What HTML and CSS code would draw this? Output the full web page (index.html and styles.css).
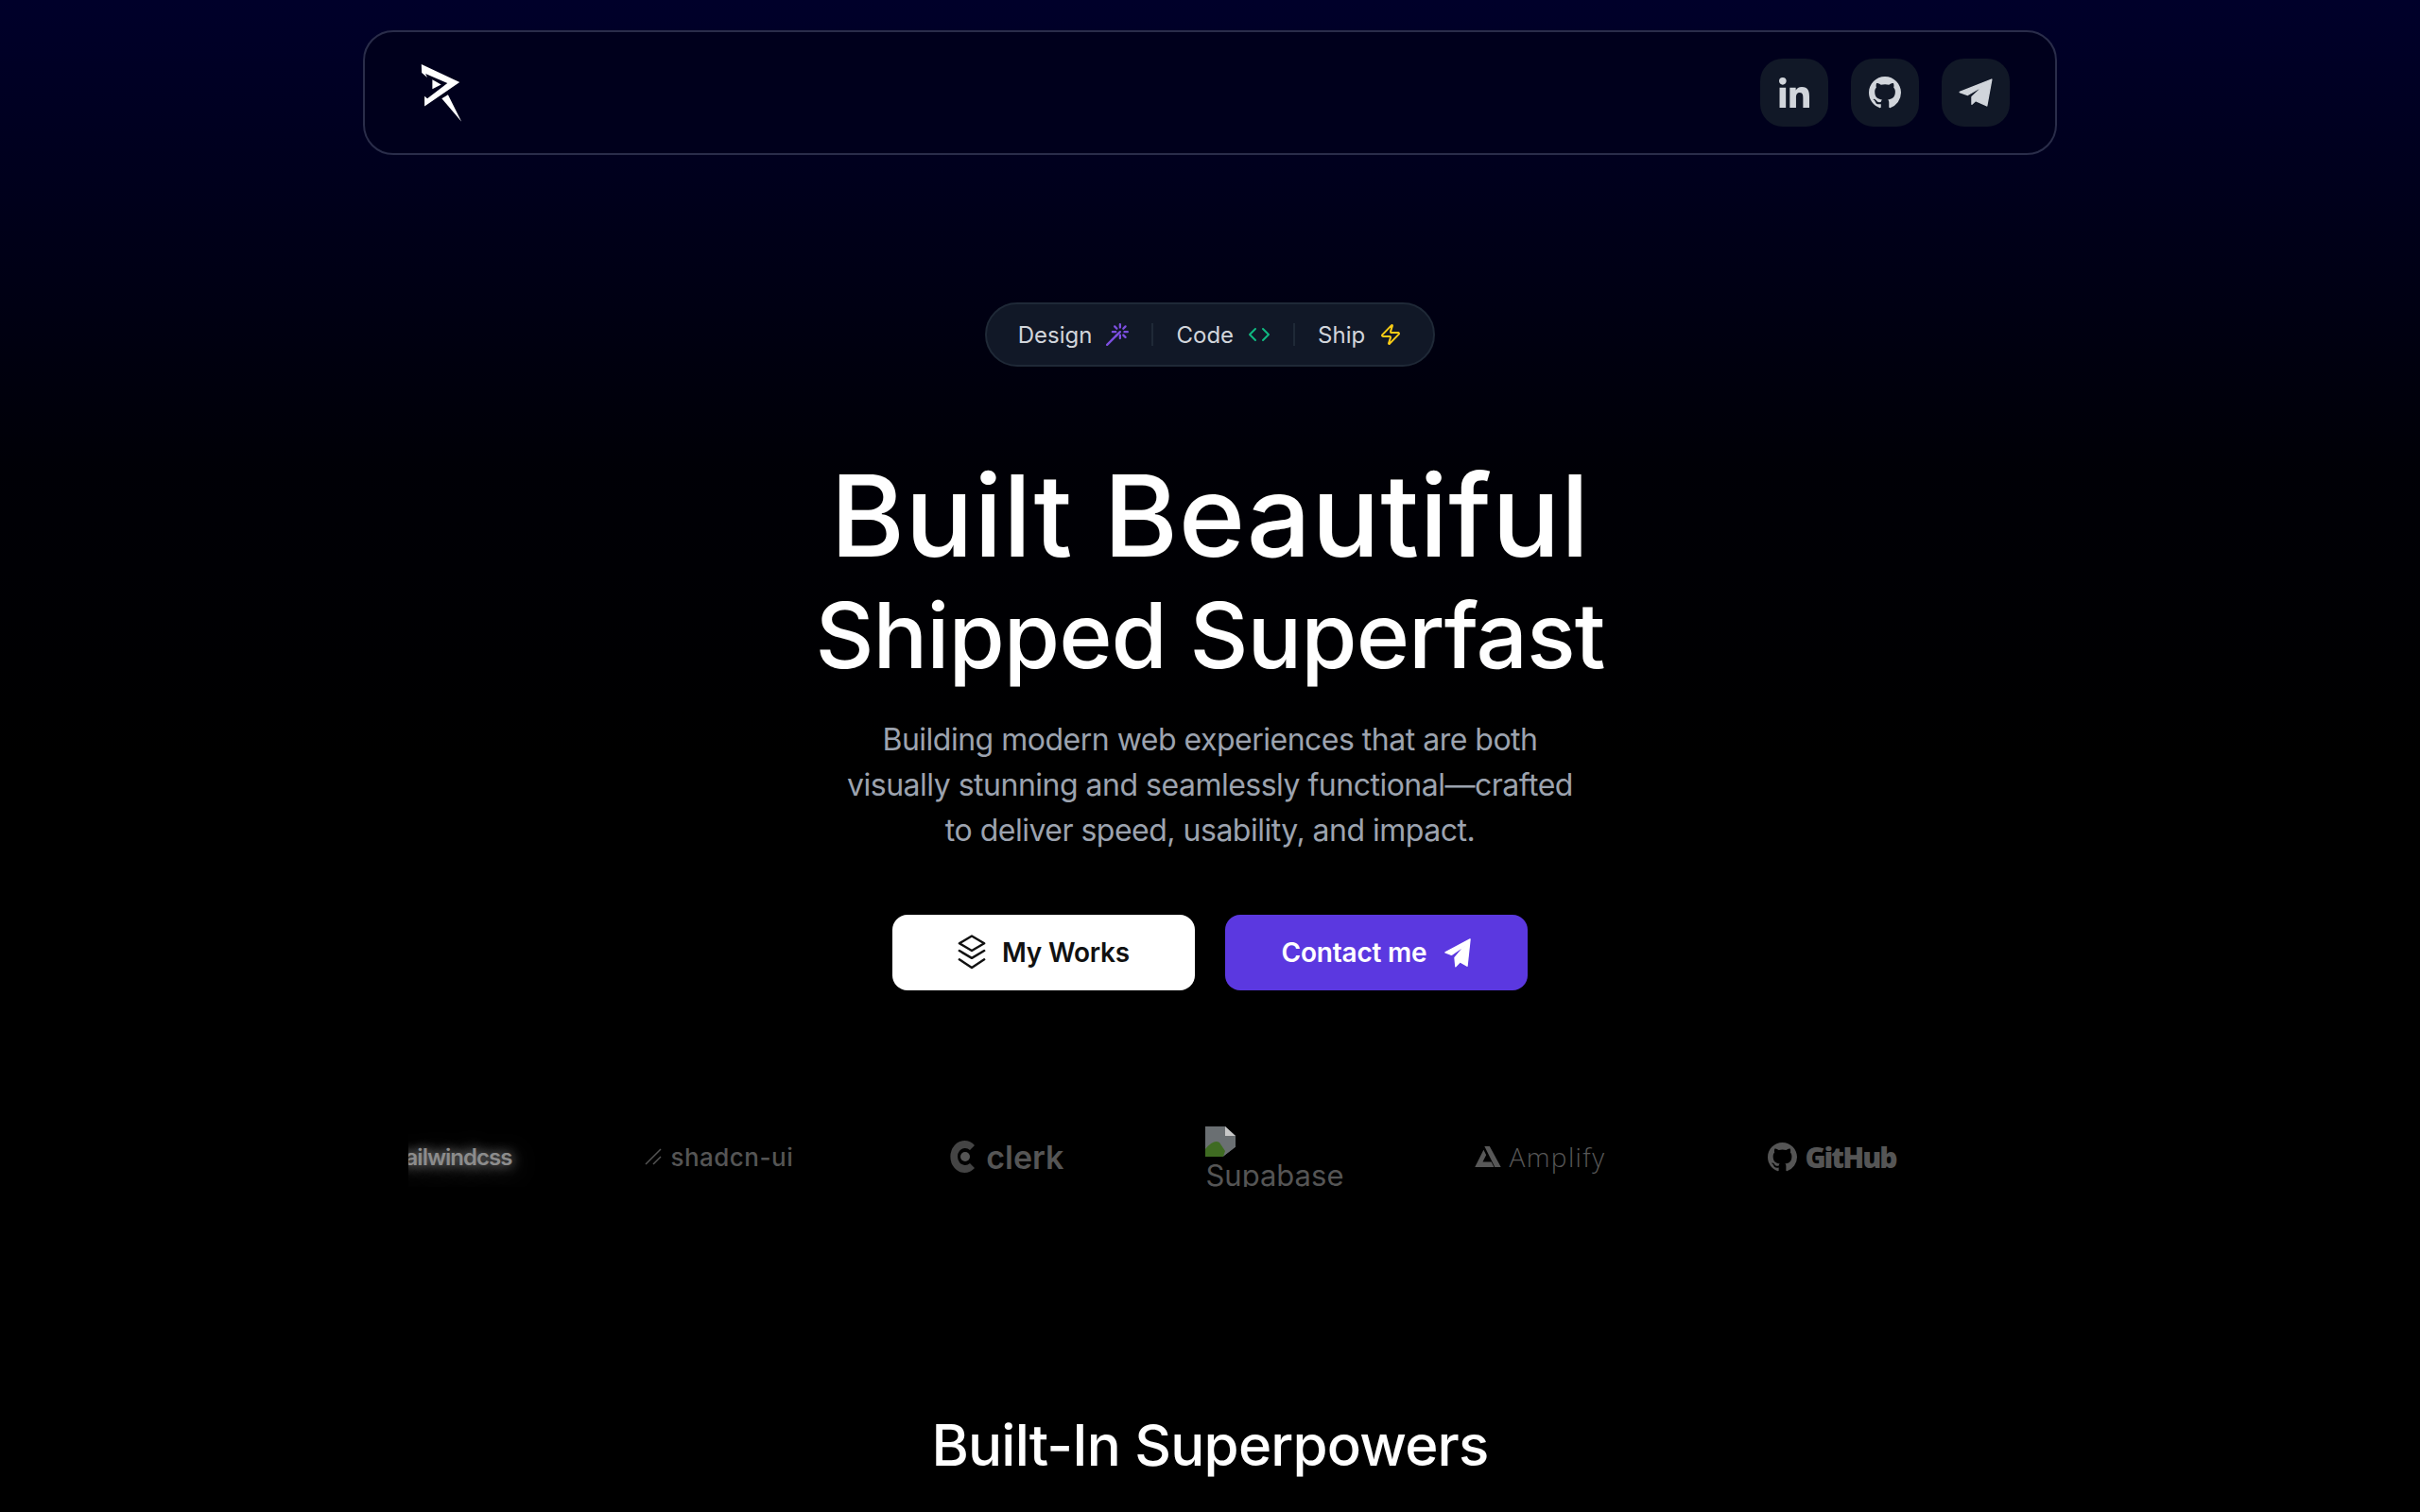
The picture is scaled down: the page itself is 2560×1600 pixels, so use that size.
FILE: index.html
```html
<!DOCTYPE html>
<html lang="en">
<head>
<meta charset="utf-8">
<title>Built Beautiful</title>
<link rel="stylesheet" href="styles.css">
</head>
<body>
<main class="page">
  <header class="nav">
    <svg class="logo" viewBox="0 0 135 190"><path d="M5 3 127 60 15 137V105L24 112 88 63 18 33 24 45 6 30Z"/><path d="M40 52 68 68 40 82Z"/><path d="M70 112 133 186 90 100Z"/></svg>
    <div class="socials">
      <a class="social"><svg class="ic-in" viewBox="0 0 448 448"><path d="M100.28 448H7.4V148.9h92.88zM53.79 108.1C24.09 108.1 0 83.5 0 53.8a53.79 53.79 0 0 1 107.58 0c0 29.7-24.1 54.3-53.79 54.3zM447.9 448h-92.68V302.4c0-34.7-.7-79.2-48.29-79.2-48.29 0-55.69 37.7-55.69 76.7V448h-92.78V148.9h89.08v40.8h1.3c12.4-23.5 42.69-48.3 87.88-48.3 94 0 111.28 61.9 111.28 142.3V448z"/></svg></a>
      <a class="social"><svg class="ic-gh" viewBox="0 0 16 16"><path d="M8 0C3.58 0 0 3.58 0 8c0 3.54 2.29 6.53 5.47 7.59.4.07.55-.17.55-.38 0-.19-.01-.82-.01-1.49-2.01.37-2.53-.49-2.69-.94-.09-.23-.48-.94-.82-1.13-.28-.15-.68-.52-.01-.53.63-.01 1.08.58 1.23.82.72 1.21 1.87.87 2.33.66.07-.52.28-.87.51-1.07-1.78-.2-3.64-.89-3.64-3.95 0-.87.31-1.59.82-2.15-.08-.2-.36-1.02.08-2.12 0 0 .67-.21 2.2.82.64-.18 1.32-.27 2-.27s1.36.09 2 .27c1.53-1.04 2.2-.82 2.2-.82.44 1.1.16 1.92.08 2.12.51.56.82 1.27.82 2.15 0 3.07-1.87 3.75-3.65 3.95.29.25.54.73.54 1.48 0 1.07-.01 1.93-.01 2.2 0 .21.15.46.55.38A8.01 8.01 0 0016 8c0-4.42-3.58-8-8-8z"/></svg></a>
      <a class="social"><svg class="ic-tg" viewBox="-3 -3 106 89"><path d="M100 0 85 83 50 67 38 78V55L75 20 25 49 0 40Z"/></svg></a>
    </div>
  </header>

  <section class="hero">
    <div class="pill">
      <span class="pill-item">Design
        <svg class="stroke violet" viewBox="2 1 21 21"><path d="m3 21 12-12"/><path d="M15 2v3M15 12v3M22 9h-3M11 9H8M20 4l-2 2M12 12l-1 1M20 14l-2-2M12 6l-2-2"/></svg>
      </span>
      <i class="divider"></i>
      <span class="pill-item">Code
        <svg class="stroke green" viewBox="0 0 24 24"><path d="m16 18 6-6-6-6"/><path d="m8 6-6 6 6 6"/></svg>
      </span>
      <i class="divider"></i>
      <span class="pill-item">Ship
        <svg class="stroke yellow" viewBox="0 0 24 24"><path d="M4 14a1 1 0 0 1-.78-1.63l9.9-10.2a.5.5 0 0 1 .86.46l-1.92 6.02A1 1 0 0 0 13 10h7a1 1 0 0 1 .78 1.63l-9.9 10.2a.5.5 0 0 1-.86-.46l1.92-6.02A1 1 0 0 0 11 14z"/></svg>
      </span>
    </div>
    <h1 class="title">Built Beautiful</h1>
    <h2 class="subtitle">Shipped Superfast</h2>
    <p class="lead">Building modern web experiences that are both<br>visually stunning and seamlessly functional—crafted<br>to deliver speed, usability, and impact.</p>
    <div class="actions">
      <a class="btn btn-light"><svg class="btn-layers" viewBox="0 0 30 39"><path d="M15 1.5 28.5 9.5 15 17.5 1.5 9.5Z"/><path d="M1.5 17.500 15 25.500 28.500 17.500"/><path d="M1.500 27 15 36 28.500 27"/></svg>My Works</a>
      <a class="btn btn-brand">Contact me<svg class="btn-plane" viewBox="-2 -2 64 71"><path d="M60 0 53 65 36 55 25 66 23 45 48 15 15 38 0 32Z"/></svg></a>
    </div>
  </section>

  <section class="brands">
    <div class="brand brand-tw">tailwindcss</div>
    <div class="brand brand-shadcn"><svg viewBox="0 0 20 20"><path d="M2 18 18 2M10 18 18 10"/></svg>shadcn-ui</div>
    <div class="brand brand-clerk"><svg viewBox="0 0 28 34"><path class="clerk-arc" d="M26 5A15 17 0 1 0 26 29L21 24A8 9 0 1 1 21 10Z"/><circle cx="16" cy="17" r="5"/></svg>clerk</div>
    <div class="brand brand-supa">
      <svg viewBox="0 0 32 32"><path class="bi-sky" d="M0 0H21L32 10V22L19 32H0Z"/><path class="bi-grass" d="M0 32V24Q9 13 15 17L21 26 19 32Z"/><path class="bi-fold" d="M21 0V10H32Z"/><path class="bi-slash" d="M19 32 32 22V24L22 32Z"/></svg>
      <span>Supabase</span>
    </div>
    <div class="brand brand-amp"><svg viewBox="0 0 30 24"><path d="M11 0 17 0 30 24H23ZM10 4 13 10 9 18H19L22 24H0Z" fill-rule="evenodd"/></svg>Amplify</div>
    <div class="brand brand-gh"><svg viewBox="0 0 16 16"><path d="M8 0C3.58 0 0 3.58 0 8c0 3.54 2.29 6.53 5.47 7.59.4.07.55-.17.55-.38 0-.19-.01-.82-.01-1.49-2.01.37-2.53-.49-2.69-.94-.09-.23-.48-.94-.82-1.13-.28-.15-.68-.52-.01-.53.63-.01 1.08.58 1.23.82.72 1.21 1.87.87 2.33.66.07-.52.28-.87.51-1.07-1.78-.2-3.64-.89-3.64-3.95 0-.87.31-1.59.82-2.15-.08-.2-.36-1.02.08-2.12 0 0 .67-.21 2.2.82.64-.18 1.32-.27 2-.27s1.36.09 2 .27c1.53-1.04 2.2-.82 2.2-.82.44 1.1.16 1.92.08 2.12.51.56.82 1.27.82 2.15 0 3.07-1.87 3.75-3.65 3.95.29.25.54.73.54 1.48 0 1.07-.01 1.93-.01 2.2 0 .21.15.46.55.38A8.01 8.01 0 0016 8c0-4.42-3.58-8-8-8z"/></svg>GitHub</div>
  </section>

  <h2 class="section-title">Built-In Superpowers</h2>
</main>
</body>
</html>
```

FILE: styles.css
```css
* { box-sizing: border-box; margin: 0; padding: 0; }
html, body { height: 100%; background: #000; overflow: hidden; }
body { font-family: Inter, "Noto Sans", sans-serif; color: #fff; }
svg { display: block; flex: none; }

.page {
  height: 1600px;
  overflow: hidden;
  background: linear-gradient(180deg, #00002a 0, #00001c 200px, #000006 500px, #000 800px);
  padding-top: 32px;
}

.nav {
  width: 1792px;
  height: 132px;
  margin: 0 auto;
  display: flex;
  align-items: center;
  justify-content: space-between;
  padding: 0 48px 0 58px;
  border: 2px solid #2a2d4a;
  border-radius: 32px;
  background: #00001c;
}
.logo { width: 45px; height: 63px; fill: #fff; }
.socials { display: flex; gap: 24px; }
.social {
  width: 72px;
  height: 72px;
  border-radius: 24px;
  background: #111827;
  display: flex;
  align-items: center;
  justify-content: center;
  fill: #d1d5db;
}
.ic-in { width: 32px; height: 32px; }
.ic-gh { width: 34px; height: 34px; }
.ic-tg { width: 36px; height: 30px; stroke: #d1d5db; stroke-width: 4; stroke-linejoin: round; }

.hero { display: flex; flex-direction: column; align-items: center; }
.pill {
  margin-top: 156px;
  height: 68px;
  padding: 0 33px;
  display: flex;
  align-items: center;
  gap: 24px;
  border: 2px solid #1f2937;
  border-radius: 34px;
  background: #111827;
  font-size: 24px;
  color: #d1d5db;
}
.pill-item { display: flex; align-items: center; gap: 15px; }
.divider { width: 2px; height: 24px; background: #1f2937; }
.stroke { width: 24px; height: 24px; fill: none; stroke-width: 2; stroke-linecap: round; stroke-linejoin: round; }
.violet { stroke: #7c4fe0; }
.green { stroke: #10b981; }
.yellow { stroke: #facc15; }

.title {
  margin-top: 92px;
  font-size: 120px;
  line-height: 132px;
  font-weight: 500;
  letter-spacing: .5px;
}
.subtitle {
  font-size: 96px;
  line-height: 120px;
  font-weight: 500;
  letter-spacing: -1px;
}
.lead {
  margin-top: 27px;
  font-size: 32px;
  line-height: 48px;
  text-align: center;
  color: #9ca3af;
  letter-spacing: -.5px;
}
.actions { margin-top: 65px; display: flex; gap: 32px; }
.btn {
  width: 320px;
  height: 80px;
  border-radius: 16px;
  display: flex;
  align-items: center;
  justify-content: center;
  font-size: 28px;
  font-weight: 600;
  letter-spacing: -.2px;
}
.btn-light { background: #fff; color: #111; gap: 17px; }
.btn-brand { background: #5b38e0; color: #fff; gap: 19px; }
.btn-layers { width: 30px; height: 38px; fill: none; stroke: #111; stroke-width: 2.5; stroke-linejoin: round; stroke-linecap: round; }
.btn-plane { width: 28px; height: 31px; fill: #fff; stroke: #fff; stroke-width: 3; stroke-linejoin: round; }

.brands {
  margin: 144px auto 0;
  width: 1696px;
  height: 64px;
  display: flex;
  align-items: center;
  overflow: hidden;
  color: #555;
  font-size: 26px;
}
.brand { display: flex; align-items: center; white-space: nowrap; fill: currentColor; }
.brand-tw {
  margin-left: -11px;
  color: #8c8c8c;
  font-size: 24px;
  font-weight: 600;
  letter-spacing: -1px;
  text-shadow: 0 0 14px rgba(255, 255, 255, .6), 0 4px 28px rgba(255, 255, 255, .35);
}
.brand-shadcn { margin-left: 140px; gap: 8px; letter-spacing: .5px; font-weight: 500; }
.brand-shadcn svg { width: 20px; height: 20px; fill: none; stroke: currentColor; stroke-width: 1.5; }
.brand-clerk { margin-left: 166px; gap: 10px; font-size: 34px; font-weight: 600; }
.brand-clerk svg { width: 28px; height: 34px; }
.clerk-arc { opacity: .8; }
.brand-supa {
  margin-left: 150px;
  height: 64px;
  overflow: hidden;
  display: block;
  font-size: 31px;
  font-weight: 400;
  line-height: 40px;
  align-self: flex-start;
  color: #555;
}
.brand-supa svg { width: 32px; height: 32px; }
.bi-sky { fill: #6a6f72; }
.bi-grass { fill: #3f6b22; }
.bi-fold { fill: #c8c8c8; }
.bi-slash { fill: #000; }
.brand-amp { margin-left: 139px; gap: 8px; font-size: 28px; font-weight: 300; letter-spacing: 1.4px; font-family: "Open Sans", sans-serif; color: #585858; }
.brand-amp svg { width: 28px; height: 22px; }
.brand-gh { margin-left: 172px; gap: 8px; font-size: 30px; font-weight: 800; font-family: "Open Sans", sans-serif; letter-spacing: -2px; }
.brand-gh svg { width: 31px; height: 31px; }

.section-title {
  margin-top: 237px;
  text-align: center;
  font-size: 60px;
  line-height: 72px;
  font-weight: 500;
  letter-spacing: -.8px;
}
```
